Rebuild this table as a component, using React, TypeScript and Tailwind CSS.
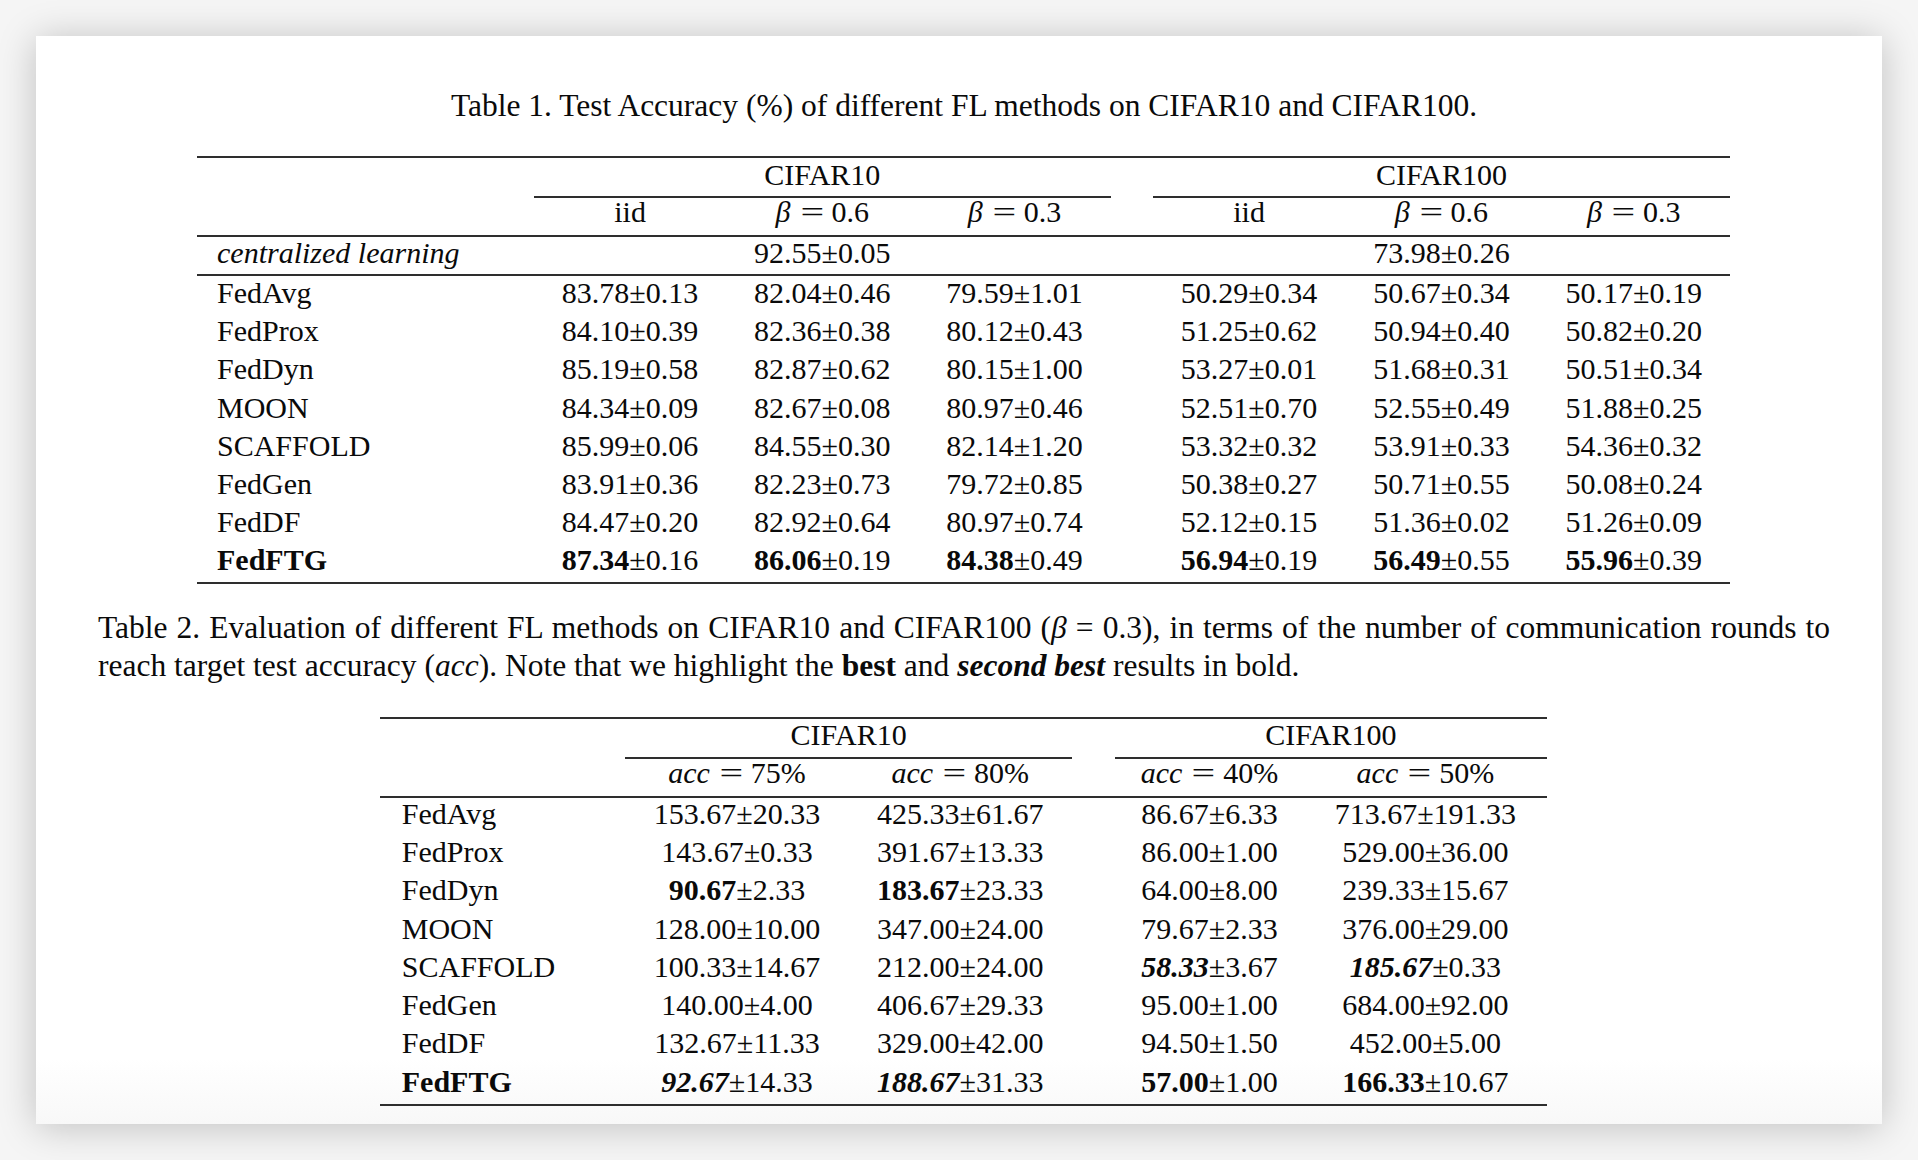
import React from "react";

type Cell = { v: string; pm: string; s?: "b" | "bi" };

const c = (v: string, pm: string, s?: "b" | "bi"): Cell => ({ v, pm, s });

const t1: { name: string; bold?: boolean; cells: Cell[] }[] = [
  { name: "FedAvg", cells: [c("83.78", "0.13"), c("82.04", "0.46"), c("79.59", "1.01"), c("50.29", "0.34"), c("50.67", "0.34"), c("50.17", "0.19")] },
  { name: "FedProx", cells: [c("84.10", "0.39"), c("82.36", "0.38"), c("80.12", "0.43"), c("51.25", "0.62"), c("50.94", "0.40"), c("50.82", "0.20")] },
  { name: "FedDyn", cells: [c("85.19", "0.58"), c("82.87", "0.62"), c("80.15", "1.00"), c("53.27", "0.01"), c("51.68", "0.31"), c("50.51", "0.34")] },
  { name: "MOON", cells: [c("84.34", "0.09"), c("82.67", "0.08"), c("80.97", "0.46"), c("52.51", "0.70"), c("52.55", "0.49"), c("51.88", "0.25")] },
  { name: "SCAFFOLD", cells: [c("85.99", "0.06"), c("84.55", "0.30"), c("82.14", "1.20"), c("53.32", "0.32"), c("53.91", "0.33"), c("54.36", "0.32")] },
  { name: "FedGen", cells: [c("83.91", "0.36"), c("82.23", "0.73"), c("79.72", "0.85"), c("50.38", "0.27"), c("50.71", "0.55"), c("50.08", "0.24")] },
  { name: "FedDF", cells: [c("84.47", "0.20"), c("82.92", "0.64"), c("80.97", "0.74"), c("52.12", "0.15"), c("51.36", "0.02"), c("51.26", "0.09")] },
  { name: "FedFTG", bold: true, cells: [c("87.34", "0.16", "b"), c("86.06", "0.19", "b"), c("84.38", "0.49", "b"), c("56.94", "0.19", "b"), c("56.49", "0.55", "b"), c("55.96", "0.39", "b")] },
];

const t2: { name: string; bold?: boolean; cells: Cell[] }[] = [
  { name: "FedAvg", cells: [c("153.67", "20.33"), c("425.33", "61.67"), c("86.67", "6.33"), c("713.67", "191.33")] },
  { name: "FedProx", cells: [c("143.67", "0.33"), c("391.67", "13.33"), c("86.00", "1.00"), c("529.00", "36.00")] },
  { name: "FedDyn", cells: [c("90.67", "2.33", "b"), c("183.67", "23.33", "b"), c("64.00", "8.00"), c("239.33", "15.67")] },
  { name: "MOON", cells: [c("128.00", "10.00"), c("347.00", "24.00"), c("79.67", "2.33"), c("376.00", "29.00")] },
  { name: "SCAFFOLD", cells: [c("100.33", "14.67"), c("212.00", "24.00"), c("58.33", "3.67", "bi"), c("185.67", "0.33", "bi")] },
  { name: "FedGen", cells: [c("140.00", "4.00"), c("406.67", "29.33"), c("95.00", "1.00"), c("684.00", "92.00")] },
  { name: "FedDF", cells: [c("132.67", "11.33"), c("329.00", "42.00"), c("94.50", "1.50"), c("452.00", "5.00")] },
  { name: "FedFTG", bold: true, cells: [c("92.67", "14.33", "bi"), c("188.67", "31.33", "bi"), c("57.00", "1.00", "b"), c("166.33", "10.67", "b")] },
];

function Val({ cell }: { cell: Cell }) {
  const cls = cell.s === "b" ? "font-bold" : cell.s === "bi" ? "font-bold italic" : "";
  return (
    <div className="text-center whitespace-nowrap">
      <span className={cls}>{cell.v}</span>
      <span>±{cell.pm}</span>
    </div>
  );
}

const Rule = () => <div className="h-[2px] bg-[#2e2e2e]" />;

function Eq() {
  return <span className="inline-block mx-[11px] scale-x-[1.4]">=</span>;
}

function Beta({ v }: { v: string }) {
  return (
    <span className="whitespace-nowrap">
      <span className="italic pr-[2px]">β</span>
      <Eq />
      {v}
    </span>
  );
}

function Acc({ v }: { v: string }) {
  return (
    <span className="whitespace-nowrap">
      <span className="italic pr-[2px]">acc</span>
      <Eq />
      {v}%
    </span>
  );
}

export default function App() {
  const t1Cols = "grid grid-cols-[337px_192.2px_192.2px_192.2px_42.4px_192.3px_192.3px_192.4px]";
  const t2Cols = "grid grid-cols-[245px_223.2px_223.2px_43.3px_189px_242.6px]";
  return (
    <div className="w-[1918px] h-[1160px] bg-[#f5f5f5] p-[36px] font-['Liberation_Serif',serif] text-[#0a0a0a]">
      <div className="w-[1846px] h-[1088px] bg-[linear-gradient(to_bottom,#ffffff_94%,#f8f8f8)] shadow-[0_3px_36px_rgba(0,0,0,0.22)] pl-[62px] pr-[52px] pt-[50.5px]">
        {/* Caption 1 */}
        <div className="text-center text-[31.5px] leading-[38px]">
          Table 1. Test Accuracy (%) of different FL methods on CIFAR10 and CIFAR100.
        </div>

        {/* Table 1 */}
        <div className="ml-[99px] w-[1533px] mt-[31.6px] text-[30px]">
          <Rule />
          <div className="grid grid-cols-[337px_576.6px_42.4px_577px] h-[38px] leading-[34px]">
            <div />
            <div className="text-center">CIFAR10</div>
            <div />
            <div className="text-center">CIFAR100</div>
          </div>
          <div className="grid grid-cols-[337px_576.6px_42.4px_577px] h-[2px]">
            <div />
            <div className="bg-[#2e2e2e]" />
            <div />
            <div className="bg-[#2e2e2e]" />
          </div>
          <div className={`${t1Cols} h-[37px] leading-[27px]`}>
            <div />
            <div className="text-center">iid</div>
            <div className="text-center"><Beta v="0.6" /></div>
            <div className="text-center"><Beta v="0.3" /></div>
            <div />
            <div className="text-center">iid</div>
            <div className="text-center"><Beta v="0.6" /></div>
            <div className="text-center"><Beta v="0.3" /></div>
          </div>
          <Rule />
          <div className="grid grid-cols-[337px_576.6px_42.4px_577px] h-[37px] leading-[31px]">
            <div className="pl-[20px] italic">centralized learning</div>
            <div className="text-center">92.55±0.05</div>
            <div />
            <div className="text-center">73.98±0.26</div>
          </div>
          <Rule />
          {t1.map((r) => (
            <div key={r.name} className={`${t1Cols} h-[38.2px] leading-[33px]`}>
              <div className={`pl-[20px] ${r.bold ? "font-bold" : ""}`}>{r.name}</div>
              <Val cell={r.cells[0]} />
              <Val cell={r.cells[1]} />
              <Val cell={r.cells[2]} />
              <div />
              <Val cell={r.cells[3]} />
              <Val cell={r.cells[4]} />
              <Val cell={r.cells[5]} />
            </div>
          ))}
          <Rule />
        </div>

        {/* Caption 2 */}
        <div className="mt-[25.6px] text-[31.5px] leading-[37.5px]">
          <div className="text-justify [text-align-last:justify] whitespace-nowrap">
            Table 2. Evaluation of different FL methods on CIFAR10 and CIFAR100 (<span className="italic">β</span> = 0.3), in terms of the number of communication rounds to
          </div>
          <div>
            reach target test accuracy (<span className="italic">acc</span>). Note that we highlight the <span className="font-bold">best</span> and <span className="font-bold italic">second best</span> results in bold.
          </div>
        </div>

        {/* Table 2 */}
        <div className="ml-[282.4px] w-[1166.3px] mt-[33.1px] text-[30px]">
          <Rule />
          <div className="grid grid-cols-[245px_446.4px_43.3px_431.6px] h-[37.4px] leading-[31px]">
            <div />
            <div className="text-center">CIFAR10</div>
            <div />
            <div className="text-center">CIFAR100</div>
          </div>
          <div className="grid grid-cols-[245px_446.4px_43.3px_431.6px] h-[2px]">
            <div />
            <div className="bg-[#2e2e2e]" />
            <div />
            <div className="bg-[#2e2e2e]" />
          </div>
          <div className={`${t2Cols} h-[37px] leading-[27.3px]`}>
            <div />
            <div className="text-center"><Acc v="75" /></div>
            <div className="text-center"><Acc v="80" /></div>
            <div />
            <div className="text-center"><Acc v="40" /></div>
            <div className="text-center"><Acc v="50" /></div>
          </div>
          <Rule />
          {t2.map((r) => (
            <div key={r.name} className={`${t2Cols} h-[38.3px] leading-[31px]`}>
              <div className={`pl-[21.4px] ${r.bold ? "font-bold" : ""}`}>{r.name}</div>
              <Val cell={r.cells[0]} />
              <Val cell={r.cells[1]} />
              <div />
              <Val cell={r.cells[2]} />
              <Val cell={r.cells[3]} />
            </div>
          ))}
          <Rule />
        </div>
      </div>
    </div>
  );
}
